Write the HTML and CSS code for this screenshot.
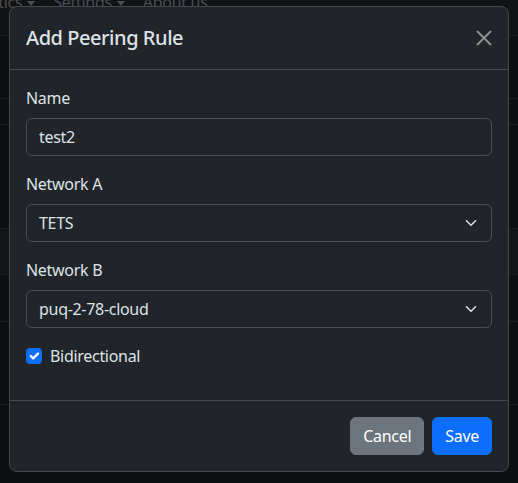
FILE: index.html
```html
<!DOCTYPE html>
<html lang="en">
<head>
<meta charset="utf-8">
<title>Add Peering Rule</title>
<link rel="stylesheet" href="styles.css">
</head>
<body>
<div class="page">
  <nav class="navbar">
    <div class="nav-links">
      <span class="nav-link first">Statistics<i class="caret"></i></span>
      <span class="nav-link">Settings<i class="caret"></i></span>
      <span class="nav-link">About us</span>
    </div>
  </nav>
  <div class="rows">
    <div class="row r1"></div>
    <div class="row r2"></div>
    <div class="row r3"></div>
    <div class="row r4 alt"></div>
    <div class="row r5"></div>
    <div class="row r6"></div>
  </div>
</div>

<div class="modal">
  <div class="modal-header">
    <h5 class="modal-title">Add Peering Rule</h5>
    <button class="btn-close" type="button" aria-label="Close">
      <svg viewBox="0 0 16 16" width="16" height="16"><path d="M1 1 15 15M15 1 1 15" stroke="currentColor" stroke-width="2" fill="none"/></svg>
    </button>
  </div>
  <div class="modal-body">
    <div class="field">
      <label class="form-label">Name</label>
      <div class="form-control">test2</div>
    </div>
    <div class="field">
      <label class="form-label">Network A</label>
      <div class="form-control select">TETS
        <svg class="chev" viewBox="0 0 16 16" width="16" height="12"><path d="m2 5 6 6 6-6" stroke="#dee2e6" stroke-width="2" stroke-linecap="round" stroke-linejoin="round" fill="none"/></svg>
      </div>
    </div>
    <div class="field">
      <label class="form-label">Network B</label>
      <div class="form-control select">puq-2-78-cloud
        <svg class="chev" viewBox="0 0 16 16" width="16" height="12"><path d="m2 5 6 6 6-6" stroke="#dee2e6" stroke-width="2" stroke-linecap="round" stroke-linejoin="round" fill="none"/></svg>
      </div>
    </div>
    <div class="field form-check">
      <span class="check-input">
        <svg viewBox="0 0 20 20" width="16" height="16"><path d="m6 10 3 3 6-6" stroke="#fff" stroke-width="3" stroke-linecap="round" stroke-linejoin="round" fill="none"/></svg>
      </span>
      <label class="check-label">Bidirectional</label>
    </div>
  </div>
  <div class="modal-footer">
    <button class="btn btn-secondary" type="button">Cancel</button>
    <button class="btn btn-primary" type="button">Save</button>
  </div>
</div>
</body>
</html>
```

FILE: styles.css
```css
* { box-sizing: border-box; }

html, body {
  margin: 0;
  padding: 0;
  height: 100%;
}

body {
  background: #0e0f11;
  font-family: "Noto Sans", "Open Sans", sans-serif;
  font-size: 16px;
  line-height: 1.5;
  letter-spacing: -0.3px;
  color: #dee2e6;
  overflow: hidden;
}

.page {
  width: 518px;
  height: 483px;
}

.navbar {
  height: 36px;
  background: #111214;
  border-bottom: 1px solid #1c1e21;
  overflow: hidden;
}

.nav-links {
  display: flex;
  margin-top: -10px;
  font-size: 16px;
  line-height: 24px;
  color: #4b4e53;
}

.nav-link {
  display: flex;
  align-items: center;
  margin-right: 18px;
  white-space: nowrap;
}

.nav-link.first {
  margin-left: -41px;
}

.caret {
  display: inline-block;
  margin-left: 5px;
  margin-top: 2px;
  width: 0;
  height: 0;
  border-top: 5px solid #4b4e53;
  border-left: 4px solid transparent;
  border-right: 4px solid transparent;
}

.row {
  border-bottom: 1px solid #1c1e21;
}

.r1 { height: 63px; }
.r2 { height: 26px; }
.r3 { height: 104px; }
.r4 { height: 46px; }
.r5 { height: 47px; }
.r6 { height: 83px; }
.alt { background: #131416; }

.modal {
  position: fixed;
  left: 9px;
  top: 6px;
  width: 500px;
  background: #212529;
  border: 1px solid #45484c;
  border-radius: 8px;
}

.modal-header {
  display: flex;
  align-items: center;
  justify-content: space-between;
  padding: 16px;
  border-bottom: 1px solid #45484c;
}

.modal-title {
  margin: 0;
  font-size: 20px;
  font-weight: 500;
  line-height: 30px;
  letter-spacing: -0.45px;
  color: #dee2e6;
}

.btn-close {
  display: flex;
  width: 16px;
  height: 16px;
  padding: 0;
  border: 0;
  background: none;
  color: #8d8f91;
}

.modal-body {
  padding: 16px;
}

.field {
  margin-bottom: 16px;
}

.form-label {
  display: block;
  margin-bottom: 8px;
  line-height: 24px;
}

.form-control {
  display: flex;
  align-items: center;
  height: 38px;
  padding: 6px 12px;
  border: 1px solid #495057;
  border-radius: 6px;
  background: #212529;
  color: #dee2e6;
  line-height: 24px;
}

.select {
  justify-content: space-between;
  padding-right: 12px;
}

.chev {
  display: block;
}

.form-check {
  display: flex;
  align-items: flex-start;
  min-height: 24px;
}

.check-input {
  display: flex;
  width: 16px;
  height: 16px;
  margin-top: 4px;
  border-radius: 4px;
  background: #0d6efd;
}

.check-label {
  margin-left: 8px;
  line-height: 24px;
}

.modal-footer {
  display: flex;
  justify-content: flex-end;
  padding: 12px;
  border-top: 1px solid #45484c;
}

.btn {
  margin: 4px;
  padding: 6px 12px;
  border: 1px solid transparent;
  border-radius: 6px;
  font-family: inherit;
  font-size: 16px;
  line-height: 24px;
  letter-spacing: -0.3px;
  color: #fff;
}

.btn-secondary {
  background: #6c757d;
  border-color: #6c757d;
}

.btn-primary {
  background: #0d6efd;
  border-color: #0d6efd;
}
```
